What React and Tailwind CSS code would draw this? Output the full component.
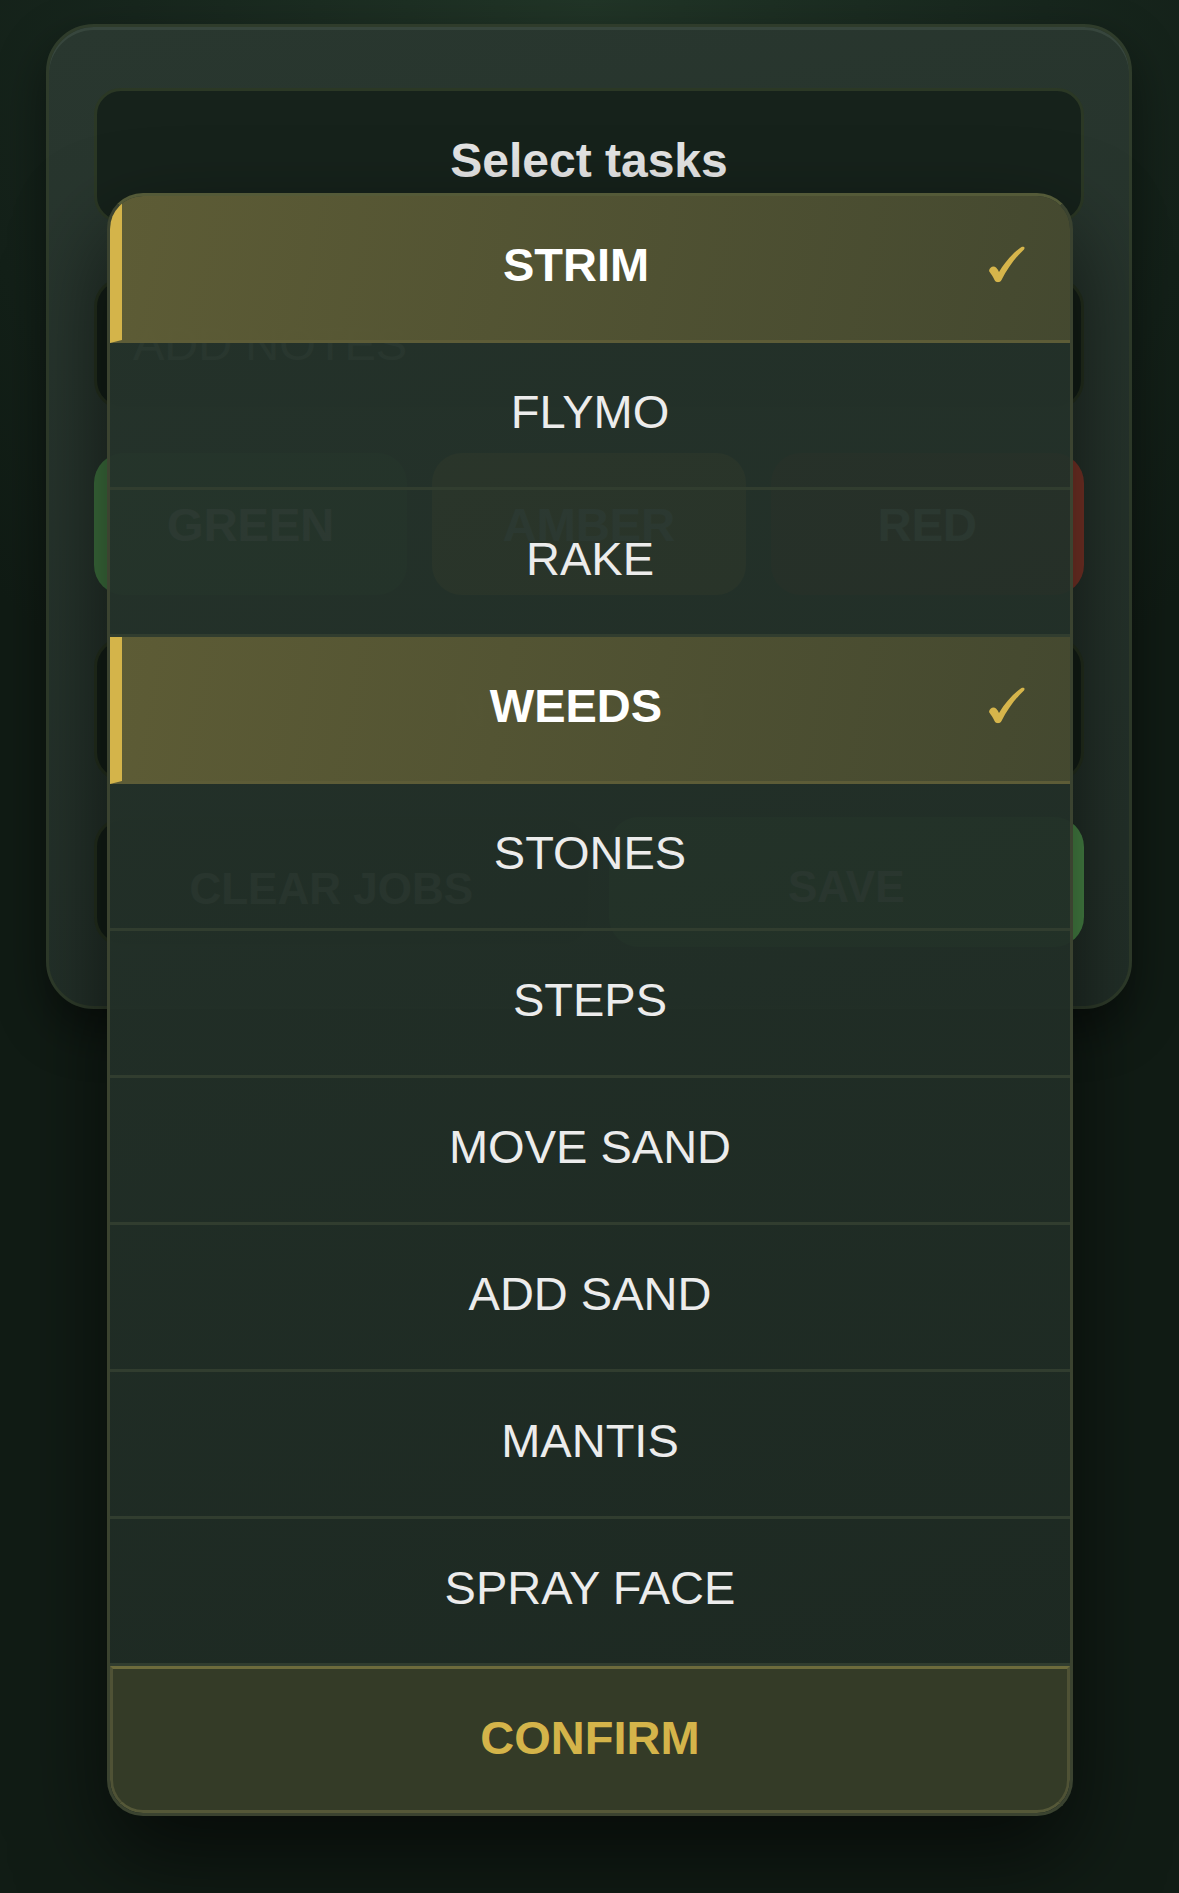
import React from "react";

const items = [
  ["STRIM", true],
  ["FLYMO", false],
  ["RAKE", false],
  ["WEEDS", true],
  ["STONES", false],
  ["STEPS", false],
  ["MOVE SAND", false],
  ["ADD SAND", false],
  ["MANTIS", false],
  ["SPRAY FACE", false],
];

function Check() {
  return (
    <svg width="36" height="36" viewBox="0 0 36 36" className="absolute right-[45px] top-1/2 -translate-y-[60%]">
      <path
        d="M0 24.5 C0.5 20.5 4.5 19 7 21 C8.5 22.5 9.5 24 10 25.5 C16 15.5 24 6.5 32.5 0.5 C34.5 -0.5 36.5 1 35 3 C27 10.5 19 21 12.5 33.5 C11 36.5 7 36.5 5.5 33.5 C4 30 2 27.5 0 24.5 Z"
        fill="#d6b54b"
      />
    </svg>
  );
}

function Row({ label, sel }) {
  if (sel) {
    return (
      <div className="relative flex h-[147px] items-center justify-center border-b-[3px] border-l-[12px] border-b-[#5d5c37] border-l-[#d4b44a] bg-[linear-gradient(100deg,rgba(96,94,54,0.95),rgba(70,74,48,0.95))] pb-[8px] pr-[40px] text-[47px] font-bold leading-none text-white">
        {label}
        <Check />
      </div>
    );
  }
  return (
    <div className="flex h-[147px] items-center justify-center border-b-[3px] border-b-[#313d2f] pb-[8px] text-[47px] leading-none text-[#ececec]">
      {label}
    </div>
  );
}

export default function App() {
  return (
    <div className="relative min-h-[1893px] w-full overflow-hidden bg-[radial-gradient(ellipse_70%_45%_at_50%_0%,#213527_0%,#17261d_55%,#111c15_100%)] font-['Liberation_Sans',Arial,sans-serif]">
      {/* background card */}
      <div className="ml-[46px] mt-[24px] h-[985px] w-[1086px] rounded-[48px] border-[3px] border-[#2f3c2b] bg-[linear-gradient(170deg,#29372f,#222f28)] px-[45px] pt-[61px] shadow-[0_20px_50px_rgba(0,0,0,0.45),inset_0_3px_0_rgba(70,85,75,0.5)]">
        <div className="flex h-[135px] items-center justify-center rounded-[27px] border-[3px] border-[#2b3825] bg-[#16221b] pt-[10px] text-[48px] font-bold leading-none text-[#e4e4e4]">
          Select tasks
        </div>
        <div className="mt-[54px] flex h-[133px] items-center rounded-[30px] border-[3px] border-[#25311f] bg-[#131e17] pl-[36px] text-[47px] leading-none text-[#9aa59e]">
          ADD NOTES
        </div>
        <div className="mt-[43px] grid h-[142px] grid-cols-3 gap-[25px]">
          <div className="flex items-center justify-center rounded-[30px] bg-[#3f7440] text-[47px] font-bold leading-none text-white">GREEN</div>
          <div className="flex items-center justify-center rounded-[30px] bg-[#c99a3e] text-[47px] font-bold leading-none text-white">AMBER</div>
          <div className="flex items-center justify-center rounded-[30px] bg-[#7c3528] text-[47px] font-bold leading-none text-white">RED</div>
        </div>
        <div className="mt-[42px] flex h-[145px] items-center justify-center rounded-[30px] border-[3px] border-[#25311f] bg-[#131e17] text-[47px] leading-none tracking-[10px] text-[#c8c8c8]">
          NOT SET
        </div>
        <div className="mt-[35px] flex h-[130px] gap-[18px]">
          <div className="flex w-[497px] items-center justify-center rounded-[30px] border-[3px] border-[#25311f] bg-[#131e17] pr-[22px] pt-[14px] text-[44px] font-bold leading-none text-[#c8c8c8]">
            CLEAR JOBS
          </div>
          <div className="flex w-[476px] items-center justify-center rounded-[30px] bg-[#4b8b49] pt-[10px] text-[44px] font-bold leading-none text-white">
            SAVE
          </div>
        </div>
      </div>

      {/* dropdown overlay */}
      <div className="absolute left-[107px] top-[193px] w-[966px] overflow-hidden rounded-[36px] border-[3px] border-[#3b4330] border-t-[#545a38] bg-[linear-gradient(165deg,rgba(37,51,43,0.96),rgba(29,41,34,0.965))] shadow-[0_40px_90px_rgba(0,0,0,0.6)]">
        {items.map(([label, sel]) => (
          <Row key={label} label={label} sel={sel} />
        ))}
        <div className="flex h-[147px] items-center justify-center rounded-b-[33px] border-x-[3px] border-b-[3px] border-t-[3px] border-x-[#4f5235] border-b-[#555838] border-t-[#6d6b3c] bg-[#343b27] pb-[5px] text-[47px] font-bold leading-none text-[#d4b44a]">
          CONFIRM
        </div>
      </div>
    </div>
  );
}
